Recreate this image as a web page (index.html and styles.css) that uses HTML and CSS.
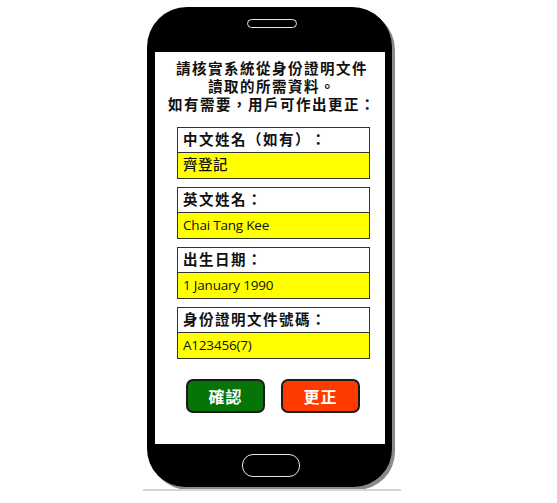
FILE: index.html
```html
<!DOCTYPE html>
<html lang="zh-Hant">
<head>
<meta charset="utf-8">
<link rel="stylesheet" href="styles.css">
</head>
<body>
<div class="stage">
  <div class="phone">
    <div class="top-bezel"><div class="speaker"></div></div>
    <div class="screen">
      <div class="heading">
        <div>請核實系統從身份證明文件</div>
        <div>讀取的所需資料。</div>
        <div>如有需要，用戶可作出更正：</div>
      </div>
      <div class="fields">
        <div class="field">
          <div class="label">中文姓名（如有）：</div>
          <div class="value cjk">齊登記</div>
        </div>
        <div class="field">
          <div class="label">英文姓名：</div>
          <div class="value">Chai Tang Kee</div>
        </div>
        <div class="field">
          <div class="label">出生日期：</div>
          <div class="value">1 January 1990</div>
        </div>
        <div class="field">
          <div class="label">身份證明文件號碼：</div>
          <div class="value">A123456(7)</div>
        </div>
      </div>
      <div class="buttons">
        <div class="btn confirm">確認</div>
        <div class="btn correct">更正</div>
      </div>
    </div>
    <div class="bottom-bezel"><div class="home"></div></div>
  </div>
  <div class="floor"></div>
</div>
</body>
</html>
```
FILE: styles.css
```css
html, body {
  margin: 0;
  padding: 0;
  background: #ffffff;
}
body {
  width: 557px;
  height: 503px;
  overflow: hidden;
  font-family: "Liberation Sans", "Noto Sans CJK TC", sans-serif;
  text-spacing-trim: space-all;
}
.stage {
  padding-top: 7px;
  padding-left: 147px;
}
.phone {
  width: 245px;
  height: 480px;
  background: #000;
  border-radius: 40px 40px 38px 38px;
  box-shadow: 3px 3px 0 #8a8a8a;
  display: flex;
  flex-direction: column;
  box-sizing: border-box;
}
.top-bezel {
  height: 45px;
  display: flex;
  justify-content: center;
  padding-top: 12px;
  box-sizing: border-box;
}
.speaker {
  width: 48px;
  height: 7px;
  border: 1.5px solid #e8e8e8;
  border-radius: 6px;
  margin-left: 4px;
}
.screen {
  margin: 0 7px 0 8px;
  height: 392px;
  background: #fff;
  display: flex;
  flex-direction: column;
}
.heading {
  padding-top: 8px;
  text-align: center;
  font-weight: 700;
  font-size: 14.5px;
  letter-spacing: 1.5px;
  line-height: 18px;
  color: #111;
  margin-left: 4px;
}
.fields {
  margin-top: 13px;
  margin-left: 22px;
  width: 193px;
  display: flex;
  flex-direction: column;
  gap: 8px;
}
.field {
  border: 1.5px solid #333;
  height: 52px;
  box-sizing: border-box;
  display: flex;
  flex-direction: column;
}
.label {
  height: 25px;
  line-height: 25px;
  padding-left: 5px;
  font-weight: 700;
  font-size: 14.5px;
  letter-spacing: 1.5px;
  color: #111;
  border-bottom: 1.5px solid #333;
  box-sizing: border-box;
}
.value {
  flex: 1;
  background: #ffff00;
  padding-left: 5px;
  font-family: "Open Sans", "Noto Sans", sans-serif;
  font-size: 13.5px;
  letter-spacing: -0.2px;
  line-height: 25px;
  color: #111;
}
.value.cjk {
  font-family: "Liberation Sans", "Noto Sans CJK TC", sans-serif;
  font-size: 14.5px;
  font-weight: 500;
  letter-spacing: 0.5px;
}
.buttons {
  margin-top: 20px;
  margin-left: 31px;
  display: flex;
  gap: 16px;
}
.btn {
  width: 79px;
  height: 34px;
  box-sizing: border-box;
  border: 2px solid #1a1a1a;
  border-radius: 7px;
  color: #fff;
  font-weight: 700;
  font-size: 16px;
  letter-spacing: 1px;
  display: flex;
  align-items: center;
  justify-content: center;
}
.confirm {
  background: #067406;
}
.correct {
  background: #ff3a00;
}
.bottom-bezel {
  flex: 1;
  display: flex;
  align-items: center;
  justify-content: center;
}
.home {
  width: 56px;
  height: 21px;
  border: 1.5px solid #e8e8e8;
  border-radius: 11px;
  margin-left: 2px;
}
.floor {
  margin-top: 2px;
  margin-left: -4px;
  width: 258px;
  height: 2px;
  background: #d6d6d6;
}
```
